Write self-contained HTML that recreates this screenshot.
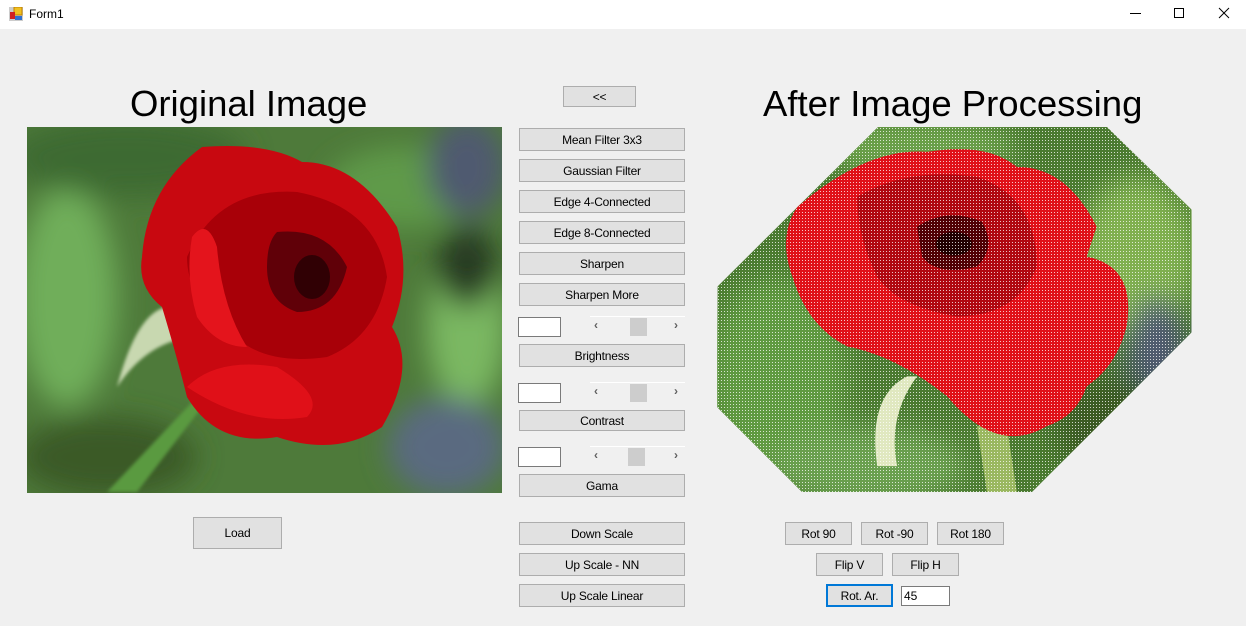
<!DOCTYPE html>
<html><head><meta charset="utf-8"><style>
*{margin:0;padding:0;box-sizing:border-box}
body{width:1246px;height:626px;background:#f0f0f0;position:relative;overflow:hidden;font-family:"Liberation Sans",Arial,sans-serif}
.tb{position:absolute;left:0;top:0;width:1246px;height:29px;background:#fff}
.t{position:absolute;font-size:12px;color:#000}
.btn{position:absolute;background:#e1e1e1;border:1px solid #adadad;font-size:12px;display:flex;align-items:center;justify-content:center;color:#000;letter-spacing:-0.2px}
.tx{position:absolute;background:#fff;border:1px solid #7a7a7a;font-size:12px;padding:2px 2px}
.h{position:absolute;font-size:36.5px;color:#000;white-space:nowrap}
.sb{position:absolute;left:590px;width:95px;height:20px;background:#f0f0f0;border-top:1px solid #fff}
.sb .th{position:absolute;top:1px;width:17px;height:18px;background:#cdcdcd}
.sb .a{position:absolute;top:1px;font-size:12px;color:#606060;font-weight:bold}
</style></head><body>
<div class="tb">
<svg style="position:absolute;left:9px;top:7px" width="14" height="14"><rect x="0" y="0" width="14" height="14" fill="#ccc"/><rect x="5" y="0" width="8" height="8" fill="#f0c020" stroke="#c08000" stroke-width="1"/><rect x="1" y="5" width="5" height="7" fill="#d02020"/><rect x="6" y="9" width="7" height="4" fill="#3070d0"/></svg>
<div class="t" style="left:29px;top:7px">Form1</div>
<svg style="position:absolute;left:1128px;top:6px" width="110" height="16" stroke="#000" fill="none" stroke-width="1"><line x1="2" y1="7.5" x2="13" y2="7.5"/><rect x="46.5" y="2.5" width="9" height="9"/><line x1="91" y1="2" x2="101" y2="12"/><line x1="101" y1="2" x2="91" y2="12"/></svg>
</div>

<div class="h" style="left:130px;top:83px">Original Image</div>
<div class="h" style="left:763px;top:83px">After Image Processing</div>

<svg style="position:absolute;left:27px;top:127px" width="475" height="366" viewBox="0 0 475 366">
<defs><filter id="bl" x="-20%" y="-20%" width="140%" height="140%"><feGaussianBlur stdDeviation="14"/></filter>
<filter id="bs"><feGaussianBlur stdDeviation="1.5"/></filter></defs>
<rect width="475" height="366" fill="#4e7a3a"/>
<g filter="url(#bl)">
<ellipse cx="40" cy="170" rx="50" ry="110" fill="#6fae5a"/>
<ellipse cx="100" cy="30" rx="120" ry="40" fill="#3d6a30"/>
<ellipse cx="380" cy="60" rx="80" ry="40" fill="#5e9a48"/>
<ellipse cx="440" cy="200" rx="40" ry="80" fill="#7ab862"/>
<ellipse cx="420" cy="320" rx="60" ry="50" fill="#5a6a80"/>
<ellipse cx="440" cy="40" rx="40" ry="50" fill="#505a70"/>
<ellipse cx="80" cy="330" rx="90" ry="40" fill="#3a5a28"/>
<ellipse cx="440" cy="140" rx="30" ry="40" fill="#263a20"/>
</g>
<path d="M80 365 L170 270 L175 280 L110 365Z" fill="#5a9a40" filter="url(#bs)"/>
<path d="M90 260 Q110 185 140 180 Q160 195 165 210 Q120 215 90 260Z" fill="#c8d8b0" filter="url(#bs)"/>
<g>
<path d="M115 130 Q120 60 175 20 Q240 15 275 35 Q330 35 370 100 Q385 150 365 200 Q390 240 355 300 Q310 330 250 310 Q190 320 160 270 Q150 230 135 180 Q110 160 115 130Z" fill="#c80810"/>
<path d="M160 130 Q190 60 270 65 Q350 80 360 150 Q350 210 300 230 Q230 240 200 200 Q160 170 160 130Z" fill="#a80008"/>
<path d="M160 260 Q190 230 250 240 Q300 270 280 290 Q220 300 160 260Z" fill="#e01018"/>
<path d="M250 105 Q300 100 320 140 Q310 185 270 185 Q240 175 240 140 Q240 115 250 105Z" fill="#600008"/>
<ellipse cx="285" cy="150" rx="18" ry="22" fill="#300004"/>
<path d="M165 110 Q180 90 190 120 Q195 180 220 220 Q190 220 170 190 Q158 150 165 110Z" fill="#e4141c"/>
</g>
</svg>

<div style="position:absolute;left:717px;top:127px;width:475px;height:365px;clip-path:polygon(161px 0,390px 0,475px 83px,475px 205px,315px 365px,85px 365px,0 280px,0 160px)">
<svg width="475" height="365" viewBox="0 0 475 366" style="display:block">
<rect width="475" height="366" fill="#4a7a30"/>
<g filter="url(#bl)">
<ellipse cx="60" cy="250" rx="70" ry="100" fill="#5e9a40"/>
<ellipse cx="200" cy="20" rx="100" ry="30" fill="#6aa048"/>
<ellipse cx="420" cy="130" rx="60" ry="80" fill="#80b050"/>
<ellipse cx="440" cy="230" rx="30" ry="60" fill="#505a70"/>
<ellipse cx="150" cy="340" rx="100" ry="40" fill="#6aa050"/>
<ellipse cx="400" cy="300" rx="60" ry="50" fill="#3a5a20"/>
</g>
<path d="M160 340 Q150 270 190 250 L200 250 Q170 290 180 340Z" fill="#e0e8c0"/>
<path d="M260 300 L290 300 L300 366 L270 366Z" fill="#9ab860"/>
<path d="M80 80 Q150 20 210 25 Q270 15 300 40 Q350 40 380 100 L370 130 Q420 140 410 200 Q400 240 370 260 Q360 290 330 300 Q280 330 230 270 Q180 230 130 220 Q90 200 75 150 Q60 110 80 80Z" fill="#e01018"/>
<path d="M140 70 Q190 40 260 50 Q320 70 320 140 Q300 190 240 190 Q180 180 160 150 Q140 110 140 70Z" fill="#b00810"/>
<path d="M200 100 Q230 80 265 95 Q280 120 260 140 Q220 150 205 130Z" fill="#500004"/>
<ellipse cx="237" cy="117" rx="18" ry="12" fill="#200000"/>
</svg>
<svg width="475" height="365" style="position:absolute;left:0;top:0"><defs><pattern id="dt" width="3" height="3" patternUnits="userSpaceOnUse"><rect x="1" y="1" width="1" height="1" fill="#fff"/></pattern></defs><rect width="475" height="365" fill="url(#dt)" opacity="0.75"/></svg>
</div>

<div class="btn" style="left:563px;top:86px;width:73px;height:21px">&lt;&lt;</div>
<div class="btn" style="left:519px;top:128px;width:166px;height:23px">Mean Filter 3x3</div>
<div class="btn" style="left:519px;top:159px;width:166px;height:23px">Gaussian Filter</div>
<div class="btn" style="left:519px;top:190px;width:166px;height:23px">Edge 4-Connected</div>
<div class="btn" style="left:519px;top:221px;width:166px;height:23px">Edge 8-Connected</div>
<div class="btn" style="left:519px;top:252px;width:166px;height:23px">Sharpen</div>
<div class="btn" style="left:519px;top:283px;width:166px;height:23px">Sharpen More</div>
<div class="tx" style="left:518px;top:317px;width:43px;height:20px"></div>
<div class="sb" style="top:316px"><span class="a" style="left:4px">&#8249;</span><div class="th" style="left:40px"></div><span class="a" style="left:84px">&#8250;</span></div>
<div class="btn" style="left:519px;top:344px;width:166px;height:23px">Brightness</div>
<div class="tx" style="left:518px;top:383px;width:43px;height:20px"></div>
<div class="sb" style="top:382px"><span class="a" style="left:4px">&#8249;</span><div class="th" style="left:40px"></div><span class="a" style="left:84px">&#8250;</span></div>
<div class="btn" style="left:519px;top:410px;width:166px;height:21px">Contrast</div>
<div class="tx" style="left:518px;top:447px;width:43px;height:20px"></div>
<div class="sb" style="top:446px"><span class="a" style="left:4px">&#8249;</span><div class="th" style="left:38px"></div><span class="a" style="left:84px">&#8250;</span></div>
<div class="btn" style="left:519px;top:474px;width:166px;height:23px">Gama</div>
<div class="btn" style="left:519px;top:522px;width:166px;height:23px">Down Scale</div>
<div class="btn" style="left:519px;top:553px;width:166px;height:23px">Up Scale - NN</div>
<div class="btn" style="left:519px;top:584px;width:166px;height:23px">Up Scale Linear</div>

<div class="btn" style="left:193px;top:517px;width:89px;height:32px">Load</div>

<div class="btn" style="left:785px;top:522px;width:67px;height:23px">Rot 90</div>
<div class="btn" style="left:861px;top:522px;width:67px;height:23px">Rot -90</div>
<div class="btn" style="left:937px;top:522px;width:67px;height:23px">Rot 180</div>
<div class="btn" style="left:816px;top:553px;width:67px;height:23px">Flip V</div>
<div class="btn" style="left:892px;top:553px;width:67px;height:23px">Flip H</div>
<div class="btn" style="left:826px;top:584px;width:67px;height:23px;border:2px solid #0078d7">Rot. Ar.</div>
<div class="tx" style="left:901px;top:586px;width:49px;height:20px;line-height:14px">45</div>
</body></html>
